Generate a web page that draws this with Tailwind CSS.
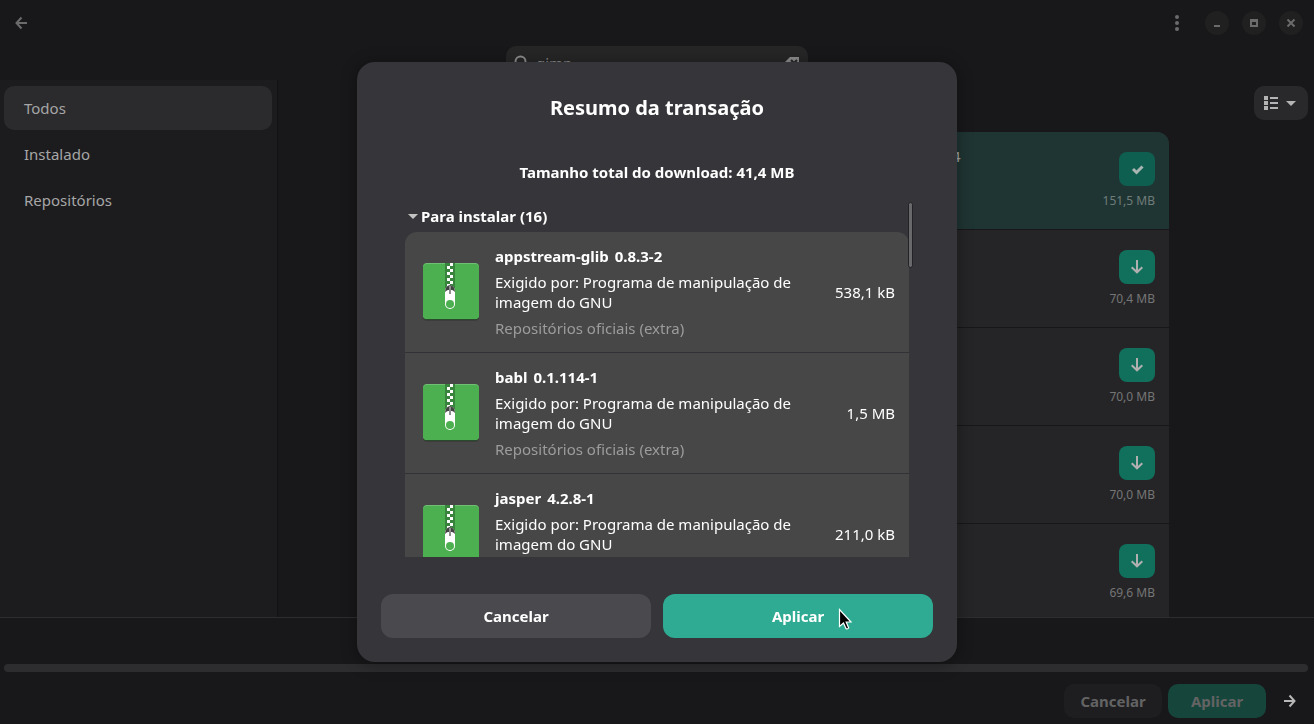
<!DOCTYPE html>
<html lang="pt-BR">
<head>
  <meta charset="UTF-8">
  <meta name="viewport" content="width=device-width, initial-scale=1.0">
  <title>Resumo da transação</title>
  <script src="https://cdn.jsdelivr.net/npm/@tailwindcss/browser@4"></script>
</head>
<body class="h-screen flex flex-col overflow-hidden bg-[#18181a] font-['Noto_Sans',sans-serif] text-[15px] leading-5 text-[#a6a6a7]">
  <!-- Icons shared by the rows -->
  <svg class="hidden">
    <symbol id="icon-package" viewBox="0 0 56 58">
      <rect x="0" y="2" width="56" height="56" rx="4" fill="#000" opacity=".15" />
      <rect x="0" y="1" width="56" height="56" rx="4" fill="#2a4a2c" />
      <rect width="56" height="56" rx="4" fill="#71bf74" />
      <path d="M0 4a4 3 0 0 1 4-3h48a4 3 0 0 1 4 3v48a4 4 0 0 1-4 4H4a4 4 0 0 1-4-4z" fill="#4caf50" />
      <path d="M22 0h10v26H22z" fill="#39843d" />
      <path d="M27 0h3v3h-3zM24 3h3v3h-3zM27 6h3v3h-3zM24 9h3v3h-3zM27 12h3v3h-3zM24 15h3v3h-3zM27 18h3v3h-3zM24 21h3v2h-3z" fill="#fff" />
      <path d="M22 27q1-4 5-5q4 1 5 5v14a5 5 0 0 1-10 0z" fill="#fff" />
      <path d="M22 29q0-6 5-7q5 1 5 7q-2-2-3-2h-4q-1 0-3 2z" fill="#424242" />
      <path d="M26 23h2v8h-2z" fill="#8e8e8e" />
      <circle cx="27" cy="41" r="4" fill="#4caf50" />
    </symbol>
    <symbol id="icon-down" viewBox="0 0 16 16">
      <path d="M8 1v12M2.700 8.200L8 13.300l5.300-5.100" fill="none" stroke="currentColor" stroke-width="2" />
    </symbol>
  </svg>

  <header>
    <div class="h-[46px] flex items-center justify-between pl-1 pr-[11px] text-[#6b6b6c]">
      <button aria-label="Voltar" class="w-[34px] h-[34px] flex items-center justify-center">
        <svg class="w-4 h-4" viewBox="0 0 16 16" fill="none" stroke="currentColor" stroke-width="2"><path d="M14 8H4M8.500 2.500L3.500 8L8.500 13.500" /></svg>
      </button>
      <div class="flex items-center gap-[13px]">
        <button aria-label="Menu" class="w-[30px] h-[34px] flex items-center justify-center">
          <svg class="w-4 h-4" viewBox="0 0 16 16" fill="currentColor"><circle cx="8" cy="2" r="2" /><circle cx="8" cy="8" r="2" /><circle cx="8" cy="14" r="2" /></svg>
        </button>
        <button aria-label="Minimizar" class="w-6 h-6 rounded-full bg-[#202021] flex items-center justify-center">
          <svg class="w-4 h-4" viewBox="0 0 16 16" fill="currentColor"><path d="M5 10h6v2H5z" /></svg>
        </button>
        <button aria-label="Maximizar" class="w-6 h-6 rounded-full bg-[#202021] flex items-center justify-center">
          <svg class="w-4 h-4" viewBox="0 0 16 16" fill="currentColor" fill-rule="evenodd"><path d="M4 4h8v8H4zM6 7v3h4V7z" /></svg>
        </button>
        <button aria-label="Fechar" class="w-6 h-6 rounded-full bg-[#202021] flex items-center justify-center">
          <svg class="w-4 h-4" viewBox="0 0 16 16" fill="none" stroke="currentColor" stroke-width="2"><path d="M4.500 4.500l7 7M11.500 4.500l-7 7" /></svg>
        </button>
      </div>
    </div>
    <label class="mx-auto w-[302px] h-[34px] px-2 flex items-center gap-1.5 rounded-[10px] bg-[#262627] text-[#8c8c8d]">
      <svg class="w-4 h-4 shrink-0" viewBox="0 0 16 16" fill="none" stroke="currentColor" stroke-width="2"><circle cx="6.500" cy="6.500" r="5" /><path d="M10 10l5 5" /></svg>
      <input type="text" value="gimp" aria-label="Pesquisar" class="flex-1 min-w-0 bg-transparent outline-none">
      <svg class="w-4 h-4 shrink-0" viewBox="0 0 16 16"><path d="M6 2h9v12H6L0 8z" fill="currentColor" /><path d="M7 5l6 6M13 5l-6 6" stroke="#262627" stroke-width="2" /></svg>
    </label>
  </header>

  <div class="flex-1 min-h-0 flex">
    <nav class="w-[278px] shrink-0 border-r border-[#121213] bg-[#1c1c1e] pt-1.5 pl-1 pr-[5px] flex flex-col gap-0.5">
      <a href="#" class="h-11 px-5 flex items-center rounded-[10px] bg-[#2b2b2d]">Todos</a>
      <a href="#" class="h-11 px-5 flex items-center rounded-[10px]">Instalado</a>
      <a href="#" class="h-11 px-5 flex items-center rounded-[10px]">Repositórios</a>
    </nav>

    <main class="flex-1 min-w-0 flex flex-col overflow-hidden">
      <div class="flex justify-end px-1.5 pt-1.5 pb-3">
        <button aria-label="Ordenar" class="w-[54px] h-[34px] flex items-center justify-center gap-1.5 rounded-[10px] bg-[#29292b] text-[#b4b4b5]">
          <svg class="w-4 h-4" viewBox="0 0 16 16" fill="currentColor"><path d="M0 1h4v4H0zM0 6h4v4H0zM0 11h4v4H0zM6 2h8v2H6zM6 7h8v2H6zM6 12h8v2H6z" /></svg>
          <svg class="w-3 h-4" viewBox="0 0 12 16" fill="currentColor"><path d="M0 6h10l-5 5z" /></svg>
        </button>
      </div>
      <ul class="w-full max-w-[746px] mx-auto rounded-t-xl overflow-hidden bg-[#252527] text-xs text-[#757576]">
        <li class="h-[98px] border-b border-[#171718] bg-[#1f3533] px-3.5 pt-5 flex justify-end">
          <span class="-mt-1.5 flex-1 text-right text-[15px] leading-5 text-[#a6a6a7] pr-[142px]">4</span>
          <div class="flex flex-col items-end gap-[7px]">
            <button aria-label="Selecionado" class="w-9 h-[34px] flex items-center justify-center rounded-lg bg-[#0f5f50] text-[#a9b5b2]">
              <svg class="w-4 h-4" viewBox="0 0 16 16" fill="none" stroke="currentColor" stroke-width="3"><path d="M4 8l3.500 3.500L13.500 5.500" /></svg>
            </button>
            <span class="text-[#6f7c7a]">151,5 MB</span>
          </div>
        </li>
        <li class="h-[98px] border-b border-[#171718] px-3.5 pt-5 flex flex-col items-end gap-[7px]">
          <button aria-label="Instalar" class="w-9 h-[34px] flex items-center justify-center rounded-lg bg-[#10705c] text-[#b0b0b0]"><svg class="w-4 h-4"><use href="#icon-down" /></svg></button>
          <span>70,4 MB</span>
        </li>
        <li class="h-[98px] border-b border-[#171718] px-3.5 pt-5 flex flex-col items-end gap-[7px]">
          <button aria-label="Instalar" class="w-9 h-[34px] flex items-center justify-center rounded-lg bg-[#10705c] text-[#b0b0b0]"><svg class="w-4 h-4"><use href="#icon-down" /></svg></button>
          <span>70,0 MB</span>
        </li>
        <li class="h-[98px] border-b border-[#171718] px-3.5 pt-5 flex flex-col items-end gap-[7px]">
          <button aria-label="Instalar" class="w-9 h-[34px] flex items-center justify-center rounded-lg bg-[#10705c] text-[#b0b0b0]"><svg class="w-4 h-4"><use href="#icon-down" /></svg></button>
          <span>70,0 MB</span>
        </li>
        <li class="h-[98px] border-b border-[#171718] px-3.5 pt-5 flex flex-col items-end gap-[7px]">
          <button aria-label="Instalar" class="w-9 h-[34px] flex items-center justify-center rounded-lg bg-[#10705c] text-[#b0b0b0]"><svg class="w-4 h-4"><use href="#icon-down" /></svg></button>
          <span>69,6 MB</span>
        </li>
      </ul>
    </main>
  </div>

  <footer class="border-t border-[#2d2d2f] pt-[46px] pb-1.5">
    <div role="progressbar" aria-label="Progresso" class="ml-1 mr-1.5 h-2 rounded-full bg-[#2d2d2f]"></div>
    <div class="mt-3 mr-1.5 flex justify-end gap-1.5 font-bold text-[#636364]">
      <button disabled class="w-[98px] h-[34px] rounded-[10px] bg-[#1e1e20]">Cancelar</button>
      <button disabled class="w-[98px] h-[34px] rounded-[10px] bg-[#16453b]">Aplicar</button>
      <button aria-label="Detalhes" class="w-9 h-[34px] flex items-center justify-center text-[#b8b8b9]">
        <svg class="w-4 h-4" viewBox="0 0 16 16" fill="none" stroke="currentColor" stroke-width="2"><path d="M2 8h10M7.500 2.500L12.500 8L7.500 13.500" /></svg>
      </button>
    </div>
  </footer>

  <!-- Transaction dialog -->
  <div class="fixed inset-0 flex items-center justify-center text-white">
    <section role="dialog" aria-labelledby="dialog-title" class="w-full max-w-[600px] rounded-[18px] bg-[#36353a] p-6 pt-8 shadow-[0_2px_14px_3px_rgba(0,0,0,0.25)]">
      <h1 id="dialog-title" class="text-center text-xl leading-7 font-bold">Resumo da transação</h1>
      <p class="mt-10 text-center font-bold">Tamanho total do download: 41,4 MB</p>
      <div class="relative mt-[22px] mx-6 h-[353px]">
        <div class="h-full overflow-y-auto [scrollbar-width:none]">
          <button aria-expanded="true" class="h-6 mb-1 px-[3px] flex items-center gap-[3px] font-bold">
            <svg class="w-[10px] h-4" viewBox="0 0 10 16" fill="#c3c3c4"><path d="M0 6h10l-5 5z" /></svg>
            Para instalar (16)
          </button>
          <ul class="rounded-xl bg-[#474748]">
            <li class="border-b border-[#323136] py-3.5 pl-[18px] pr-3.5 flex items-center gap-4">
              <svg class="w-14 h-[58px] shrink-0"><use href="#icon-package" /></svg>
              <div class="flex-1 flex flex-col gap-1.5">
                <h2 class="font-bold flex gap-1.5"><span>appstream-glib</span><span>0.8.3-2</span></h2>
                <p>Exigido por: Programa de manipulação de imagem do GNU</p>
                <p class="text-[#9c9c9d]">Repositórios oficiais (extra)</p>
              </div>
              <span class="whitespace-nowrap">538,1 kB</span>
            </li>
            <li class="border-b border-[#323136] py-3.5 pl-[18px] pr-3.5 flex items-center gap-4">
              <svg class="w-14 h-[58px] shrink-0"><use href="#icon-package" /></svg>
              <div class="flex-1 flex flex-col gap-1.5">
                <h2 class="font-bold flex gap-1.5"><span>babl</span><span>0.1.114-1</span></h2>
                <p>Exigido por: Programa de manipulação de imagem do GNU</p>
                <p class="text-[#9c9c9d]">Repositórios oficiais (extra)</p>
              </div>
              <span class="whitespace-nowrap">1,5 MB</span>
            </li>
            <li class="border-b border-[#323136] py-3.5 pl-[18px] pr-3.5 flex items-center gap-4">
              <svg class="w-14 h-[58px] shrink-0"><use href="#icon-package" /></svg>
              <div class="flex-1 flex flex-col gap-1.5">
                <h2 class="font-bold flex gap-1.5"><span>jasper</span><span>4.2.8-1</span></h2>
                <p>Exigido por: Programa de manipulação de imagem do GNU</p>
                <p class="text-[#9c9c9d]">Repositórios oficiais (extra)</p>
              </div>
              <span class="whitespace-nowrap">211,0 kB</span>
            </li>
          </ul>
        </div>
        <!-- Scrollbar thumb -->
        <div class="absolute -top-0.5 -right-1 w-[5px] h-[66px] rounded-full border border-[#232226] bg-[#69696b]"></div>
      </div>
      <div class="mt-[37px] grid grid-cols-2 gap-3 font-bold">
        <button class="h-11 rounded-xl bg-[#4a494e]">Cancelar</button>
        <button class="h-11 rounded-xl bg-[#2eab92]">Aplicar</button>
      </div>
    </section>
  </div>

  <!-- Mouse pointer -->
  <svg class="absolute left-[838px] top-[608px] w-4 h-6" viewBox="0 0 16 24"><path d="M1.500 1.500v17l4-3.500l2.500 5.500q1.500 1 2.700-.5l-2.500-6h4.800z" fill="#000" stroke="#fff" stroke-width="1.200" /></svg>
</body>
</html>
